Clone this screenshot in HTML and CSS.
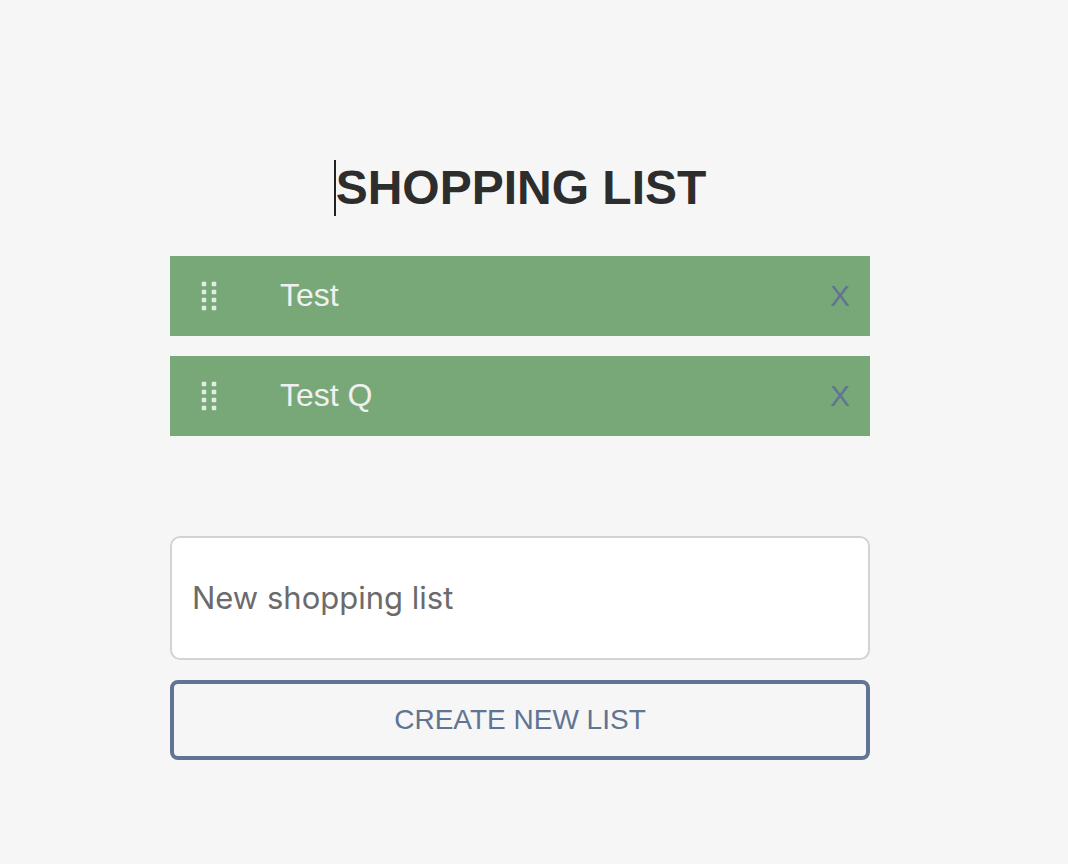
FILE: index.html
```
<!DOCTYPE html>
<html lang="en">
<head>
<meta charset="utf-8">
<meta name="viewport" content="width=device-width, initial-scale=1">
<title>Shopping list</title>
<link rel="stylesheet" href="styles.css">
</head>
<body>
<main class="page">
  <h1 class="title">SHOPPING LIST</h1>
  <ul class="lists">
    <li class="item">
      <svg class="handle" viewBox="0 0 16 32" aria-hidden="true">
        <path class="dot-edge" d="M3 4h0M13 4h0M3 12h0M13 12h0M3 20h0M13 20h0M3 28h0M13 28h0"/>
        <path class="dot-core" d="M1 2h4v4H1zM11 2h4v4h-4zM1 10h4v4H1zM11 10h4v4h-4zM1 18h4v4H1zM11 18h4v4h-4zM1 26h4v4H1zM11 26h4v4h-4z"/>
      </svg>
      <a class="name" href="#test">Test</a>
      <button class="remove" type="button" aria-label="Remove Test">X</button>
    </li>
    <li class="item">
      <svg class="handle" viewBox="0 0 16 32" aria-hidden="true">
        <path class="dot-edge" d="M3 4h0M13 4h0M3 12h0M13 12h0M3 20h0M13 20h0M3 28h0M13 28h0"/>
        <path class="dot-core" d="M1 2h4v4H1zM11 2h4v4h-4zM1 10h4v4H1zM11 10h4v4h-4zM1 18h4v4H1zM11 18h4v4h-4zM1 26h4v4H1zM11 26h4v4h-4z"/>
      </svg>
      <a class="name" href="#test-q">Test Q</a>
      <button class="remove" type="button" aria-label="Remove Test Q">X</button>
    </li>
  </ul>
  <form class="form">
    <input class="field" type="text" placeholder="New shopping list" aria-label="New shopping list">
    <button class="create" type="button">CREATE NEW LIST</button>
  </form>
</main>
</body>
</html>
```
FILE: styles.css
```
* {
  box-sizing: border-box;
}

body {
  margin: 0;
  background: #f6f6f6;
  color: #2d2d2d;
  font-family: "Liberation Sans", Arial, sans-serif;
}

.page {
  max-width: 700px;
  margin: 0 198px 0 170px;
  padding: 160px 0 104px;
  display: flex;
  flex-direction: column;
}

.title {
  align-self: center;
  margin: 0 0 40px;
  border-left: 2px solid #222;
  font-size: 48px;
  line-height: 56px;
  font-weight: 700;
}

.lists {
  display: flex;
  flex-direction: column;
  gap: 20px;
  margin: 0 0 100px;
  padding: 0;
  list-style: none;
}

.item {
  display: flex;
  align-items: center;
  min-height: 80px;
  padding: 0 20px 0 31px;
  background: #78a878;
}

.handle {
  width: 16px;
  height: 32px;
  margin-right: 63px;
  overflow: visible;
}

.dot-edge {
  fill: none;
  stroke: #98bd98;
  stroke-width: 6;
  stroke-linecap: round;
}

.dot-core {
  fill: #e2ece2;
}

.name {
  flex: 1;
  padding-bottom: 2px;
  color: #f0f0f0;
  font-size: 32px;
  line-height: 40px;
  text-decoration: none;
}

.remove {
  padding: 0;
  border: 0;
  background: none;
  color: #607494;
  font: 30px/40px "Liberation Sans", Arial, sans-serif;
}

.form {
  display: flex;
  flex-direction: column;
  gap: 20px;
}

.field {
  width: 100%;
  padding: 40px 20px;
  border: 2px solid #d3d3d3;
  border-radius: 10px;
  background: #fff;
  font: 31px/40px Inter, "Liberation Sans", sans-serif;
}

.field::placeholder {
  color: #6b6b6b;
  opacity: 1;
}

.create {
  padding: 18px 20px;
  border: 4px solid #607494;
  border-radius: 8px;
  background: transparent;
  color: #607494;
  font: 28px/36px "Liberation Sans", Arial, sans-serif;
}
```
